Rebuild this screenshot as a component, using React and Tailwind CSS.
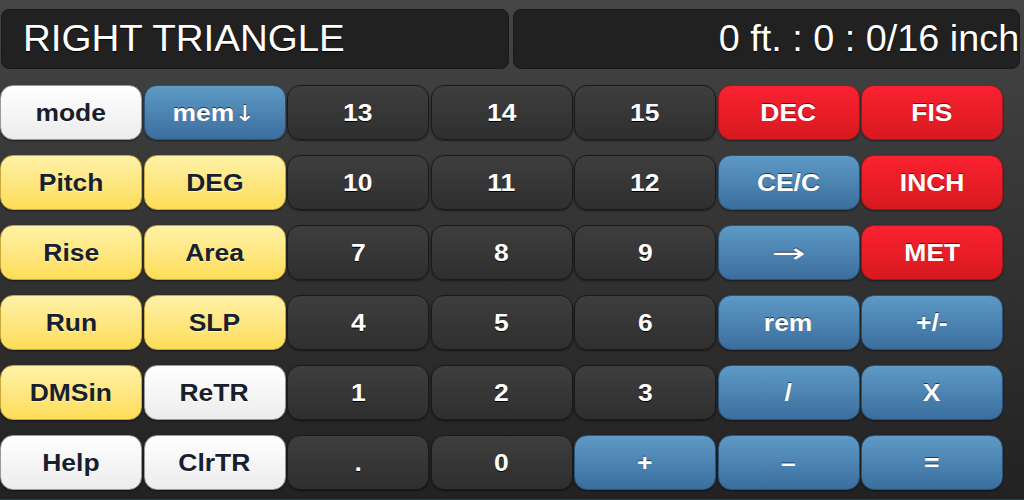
import React from 'react';

const styles = {
  white: 'bg-gradient-to-b from-[#ffffff] to-[#ececec] border-[#9a9a9a] text-[#17202c] [text-shadow:0_1px_0_#ffffff]',
  blue: 'bg-gradient-to-b from-[#5e9ac6] to-[#3b6e9e] border-[#2a5379] text-white [text-shadow:0_-1px_0_#1d3b57]',
  dark: 'bg-gradient-to-b from-[#3e3e3e] to-[#2f2f2f] border-[#1a1a1a] text-white [text-shadow:0_1px_0_#000]',
  yellow: 'bg-gradient-to-b from-[#fff1a6] to-[#fddd55] border-[#caa83a] text-[#17202c] [text-shadow:0_1px_0_#fff6c8]',
  red: 'bg-gradient-to-b from-[#fb2130] to-[#d71920] border-[#a8141a] text-white [text-shadow:0_-1px_0_#7a0c10]',
};

const rows = [
  [['mode', 'white'], ['mem', 'blue', '↓'], ['13', 'dark'], ['14', 'dark'], ['15', 'dark'], ['DEC', 'red'], ['FIS', 'red']],
  [['Pitch', 'yellow'], ['DEG', 'yellow'], ['10', 'dark'], ['11', 'dark'], ['12', 'dark'], ['CE/C', 'blue'], ['INCH', 'red']],
  [['Rise', 'yellow'], ['Area', 'yellow'], ['7', 'dark'], ['8', 'dark'], ['9', 'dark'], ['', 'blue', '→'], ['MET', 'red']],
  [['Run', 'yellow'], ['SLP', 'yellow'], ['4', 'dark'], ['5', 'dark'], ['6', 'dark'], ['rem', 'blue'], ['+/-', 'blue']],
  [['DMSin', 'yellow'], ['ReTR', 'white'], ['1', 'dark'], ['2', 'dark'], ['3', 'dark'], ['/', 'blue'], ['X', 'blue']],
  [['Help', 'white'], ['ClrTR', 'white'], ['.', 'dark'], ['0', 'dark'], ['+', 'blue'], ['–', 'blue'], ['=', 'blue']],
];

const Key = ({ label, kind, arrow }) => (
  <button
    className={`h-[55px] rounded-[13px] border shadow-[0_1px_2px_rgba(0,0,0,0.5)] flex items-center justify-center pt-[2px] text-[23px] font-bold ${styles[kind]}`}
  >
    <span className="inline-block scale-x-[1.15]">
      {label}
      {arrow && (
        <span
          className={`font-normal ${label ? 'text-[22px]' : 'text-[26px] inline-block scale-x-[1.35]'}`}
          style={{ fontFamily: '"DejaVu Sans", sans-serif' }}
        >
          {arrow}
        </span>
      )}
    </span>
  </button>
);

export default function App() {
  return (
    <div
      className="w-[1024px] h-[500px] overflow-hidden flex flex-col bg-gradient-to-b from-[#454545] via-[#333333] to-[#222222]"
      style={{ fontFamily: '"Liberation Sans", Arial, sans-serif' }}
    >
      {/* displays */}
      <div className="flex gap-[4px] pt-[9px] pl-[1px] pr-[4px]">
        <div className="w-[508px] h-[60px] rounded-[8px] bg-[#212121] border border-[#1a1a1a] flex items-center pl-[21px]">
          <span className="inline-block origin-left scale-x-[1.07] text-[36px] text-white leading-none [text-shadow:0_1px_1px_#000]">
            RIGHT TRIANGLE
          </span>
        </div>
        <div className="flex-1 h-[60px] rounded-[8px] bg-[#212121] border border-[#1a1a1a] flex items-center justify-end overflow-hidden">
          <span className="inline-block origin-right scale-x-[1.05] text-[36px] text-white leading-none whitespace-nowrap [text-shadow:0_1px_1px_#000]">
            0 ft. : 0 : 0/16 inch
          </span>
        </div>
      </div>

      {/* keypad */}
      <div className="grid grid-cols-[repeat(7,142px)] gap-x-[1.5px] gap-y-[15px] mt-[16px]">
        {rows.flat().map(([label, kind, arrow], i) => (
          <Key key={i} label={label} kind={kind} arrow={arrow} />
        ))}
      </div>

      <div className="mt-auto h-px bg-[#1e4a5e]" />
    </div>
  );
}
